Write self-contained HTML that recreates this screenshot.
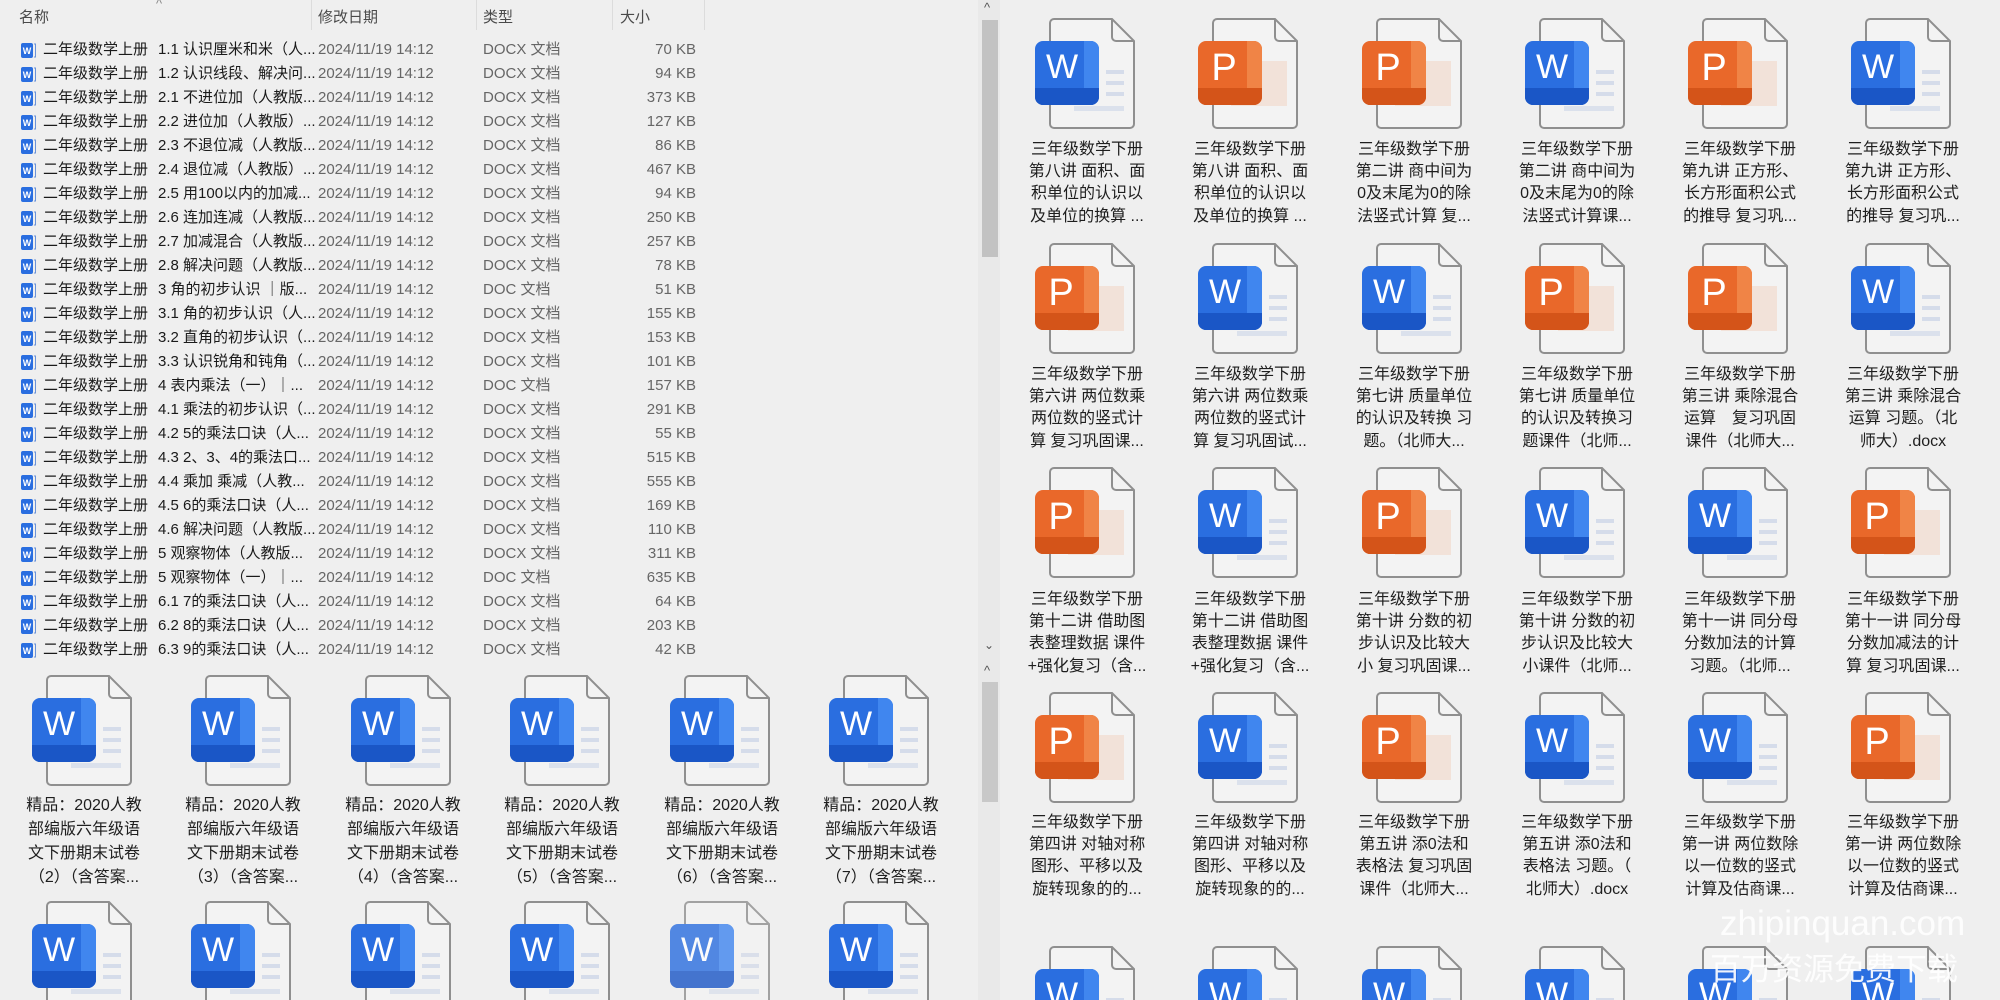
<!DOCTYPE html>
<html><head><meta charset="utf-8">
<style>
*{margin:0;padding:0;box-sizing:border-box}
html{width:2000px;height:1000px;overflow:hidden}
body{width:2000px;height:1000px;overflow:hidden;background:#efefef;font-family:"Liberation Sans","Noto Sans CJK SC",sans-serif;position:relative}
#wrap{position:absolute;left:0;top:0;width:2000px;height:1000px;overflow:hidden}
.a{position:absolute}
.hd{position:absolute;top:6px;font-size:15px;color:#4a4a4a}
.sep{position:absolute;top:0;width:1px;height:30px;background:#dcdcdc}
.r{position:absolute;left:0;height:24px;line-height:24px;font-size:15px;white-space:nowrap;width:980px}
.r span{position:absolute}
.r .n{left:43px;color:#1a1a1a}
.r .m{left:158px;color:#1a1a1a}
.r .d{left:318px;color:#666}
.r .t{left:483px;color:#666}
.r .s{right:284px;color:#666}
.r svg{position:absolute;left:20px;top:4px}
.lb{position:absolute;width:150px;text-align:center;font-size:16px;color:#1e1e1e;white-space:nowrap}
.R{line-height:22.2px}
.L{line-height:24px}
.ic{position:absolute;width:102px;height:112px}
</style></head><body><div id="wrap">
<svg width="0" height="0" style="position:absolute">
<defs>
<symbol id="pg" viewBox="0 0 102 112">
<path d="M20,1 H78 L100,23 V106 a4,4 0 0 1 -4,4 H20 a4,4 0 0 1 -4,-4 V5 a4,4 0 0 1 4,-4 Z" fill="#f3f3f3" stroke="#8f8f8f" stroke-width="2"/>
<path d="M78,1 V19 a4,4 0 0 0 4,4 H100" fill="none" stroke="#8f8f8f" stroke-width="2"/>
</symbol>
<symbol id="iw" viewBox="0 0 102 112">
<use href="#pg"/>
<rect x="72" y="52" width="18" height="4" fill="#d5dcea"/>
<rect x="72" y="63" width="18" height="4" fill="#d5dcea"/>
<rect x="72" y="74" width="18" height="4" fill="#d5dcea"/>
<rect x="40" y="88" width="50" height="5" fill="#dbe1ec"/>
<rect x="1" y="23" width="64" height="64" rx="8" fill="#2a6ee0"/>
<path d="M50,23 H57 a8,8 0 0 1 8,8 V70 H50 Z" fill="#4086ef"/>
<path d="M1,70 H65 V79 a8,8 0 0 1 -8,8 H9 a8,8 0 0 1 -8,-8 Z" fill="#1a56c6"/>
<text x="28" y="60" text-anchor="middle" font-family="Liberation Sans" font-size="34" fill="#fff">W</text>
</symbol>
<symbol id="ip" viewBox="0 0 102 112">
<use href="#pg"/>
<rect x="64" y="43" width="26" height="45" fill="#f2e2d9"/>
<rect x="34" y="84" width="30" height="4" fill="#f2e2d9"/>
<rect x="1" y="23" width="64" height="64" rx="8" fill="#e9682a"/>
<path d="M50,23 H57 a8,8 0 0 1 8,8 V70 H50 Z" fill="#f08446"/>
<path d="M1,70 H65 V79 a8,8 0 0 1 -8,8 H9 a8,8 0 0 1 -8,-8 Z" fill="#d45419"/>
<text x="27" y="62" text-anchor="middle" font-family="Liberation Sans" font-size="38" fill="#fff">P</text>
</symbol>
<symbol id="sm" viewBox="0 0 17 17">
<rect x="1" y="1" width="12" height="15" rx="2" fill="#2a6ee0"/>
<text x="7" y="12" text-anchor="middle" font-family="Liberation Sans" font-weight="bold" font-size="9" fill="#fff">W</text>
<path d="M14,2 h1.5 v13 h-1.5" fill="none" stroke="#6b93d8" stroke-width="1"/>
</symbol>
</defs></svg>

<div class="hd" style="left:19px">名称</div>
<div class="a" style="left:156px;top:-4px;font-size:13px;color:#888">^</div>
<div class="sep" style="left:311px"></div>
<div class="hd" style="left:318px">修改日期</div>
<div class="sep" style="left:476px"></div>
<div class="hd" style="left:483px">类型</div>
<div class="sep" style="left:612px"></div>
<div class="hd" style="left:620px">大小</div>
<div class="sep" style="left:704px"></div>

<div class="r" style="top:38px"><svg width="17" height="17"><use href="#sm"/></svg><span class="n">二年级数学上册</span><span class="m">1.1 认识厘米和米（人...</span><span class="d">2024/11/19 14:12</span><span class="t">DOCX 文档</span><span class="s">70 KB</span></div>
<div class="r" style="top:62px"><svg width="17" height="17"><use href="#sm"/></svg><span class="n">二年级数学上册</span><span class="m">1.2 认识线段、解决问...</span><span class="d">2024/11/19 14:12</span><span class="t">DOCX 文档</span><span class="s">94 KB</span></div>
<div class="r" style="top:86px"><svg width="17" height="17"><use href="#sm"/></svg><span class="n">二年级数学上册</span><span class="m">2.1 不进位加（人教版...</span><span class="d">2024/11/19 14:12</span><span class="t">DOCX 文档</span><span class="s">373 KB</span></div>
<div class="r" style="top:110px"><svg width="17" height="17"><use href="#sm"/></svg><span class="n">二年级数学上册</span><span class="m">2.2 进位加（人教版）...</span><span class="d">2024/11/19 14:12</span><span class="t">DOCX 文档</span><span class="s">127 KB</span></div>
<div class="r" style="top:134px"><svg width="17" height="17"><use href="#sm"/></svg><span class="n">二年级数学上册</span><span class="m">2.3 不退位减（人教版...</span><span class="d">2024/11/19 14:12</span><span class="t">DOCX 文档</span><span class="s">86 KB</span></div>
<div class="r" style="top:158px"><svg width="17" height="17"><use href="#sm"/></svg><span class="n">二年级数学上册</span><span class="m">2.4 退位减（人教版）...</span><span class="d">2024/11/19 14:12</span><span class="t">DOCX 文档</span><span class="s">467 KB</span></div>
<div class="r" style="top:182px"><svg width="17" height="17"><use href="#sm"/></svg><span class="n">二年级数学上册</span><span class="m">2.5 用100以内的加减...</span><span class="d">2024/11/19 14:12</span><span class="t">DOCX 文档</span><span class="s">94 KB</span></div>
<div class="r" style="top:206px"><svg width="17" height="17"><use href="#sm"/></svg><span class="n">二年级数学上册</span><span class="m">2.6 连加连减（人教版...</span><span class="d">2024/11/19 14:12</span><span class="t">DOCX 文档</span><span class="s">250 KB</span></div>
<div class="r" style="top:230px"><svg width="17" height="17"><use href="#sm"/></svg><span class="n">二年级数学上册</span><span class="m">2.7 加减混合（人教版...</span><span class="d">2024/11/19 14:12</span><span class="t">DOCX 文档</span><span class="s">257 KB</span></div>
<div class="r" style="top:254px"><svg width="17" height="17"><use href="#sm"/></svg><span class="n">二年级数学上册</span><span class="m">2.8 解决问题（人教版...</span><span class="d">2024/11/19 14:12</span><span class="t">DOCX 文档</span><span class="s">78 KB</span></div>
<div class="r" style="top:278px"><svg width="17" height="17"><use href="#sm"/></svg><span class="n">二年级数学上册</span><span class="m">3 角的初步认识 ｜版...</span><span class="d">2024/11/19 14:12</span><span class="t">DOC 文档</span><span class="s">51 KB</span></div>
<div class="r" style="top:302px"><svg width="17" height="17"><use href="#sm"/></svg><span class="n">二年级数学上册</span><span class="m">3.1 角的初步认识（人...</span><span class="d">2024/11/19 14:12</span><span class="t">DOCX 文档</span><span class="s">155 KB</span></div>
<div class="r" style="top:326px"><svg width="17" height="17"><use href="#sm"/></svg><span class="n">二年级数学上册</span><span class="m">3.2 直角的初步认识（...</span><span class="d">2024/11/19 14:12</span><span class="t">DOCX 文档</span><span class="s">153 KB</span></div>
<div class="r" style="top:350px"><svg width="17" height="17"><use href="#sm"/></svg><span class="n">二年级数学上册</span><span class="m">3.3 认识锐角和钝角（...</span><span class="d">2024/11/19 14:12</span><span class="t">DOCX 文档</span><span class="s">101 KB</span></div>
<div class="r" style="top:374px"><svg width="17" height="17"><use href="#sm"/></svg><span class="n">二年级数学上册</span><span class="m">4 表内乘法（一）｜...</span><span class="d">2024/11/19 14:12</span><span class="t">DOC 文档</span><span class="s">157 KB</span></div>
<div class="r" style="top:398px"><svg width="17" height="17"><use href="#sm"/></svg><span class="n">二年级数学上册</span><span class="m">4.1 乘法的初步认识（...</span><span class="d">2024/11/19 14:12</span><span class="t">DOCX 文档</span><span class="s">291 KB</span></div>
<div class="r" style="top:422px"><svg width="17" height="17"><use href="#sm"/></svg><span class="n">二年级数学上册</span><span class="m">4.2 5的乘法口诀（人...</span><span class="d">2024/11/19 14:12</span><span class="t">DOCX 文档</span><span class="s">55 KB</span></div>
<div class="r" style="top:446px"><svg width="17" height="17"><use href="#sm"/></svg><span class="n">二年级数学上册</span><span class="m">4.3 2、3、4的乘法口...</span><span class="d">2024/11/19 14:12</span><span class="t">DOCX 文档</span><span class="s">515 KB</span></div>
<div class="r" style="top:470px"><svg width="17" height="17"><use href="#sm"/></svg><span class="n">二年级数学上册</span><span class="m">4.4 乘加 乘减（人教...</span><span class="d">2024/11/19 14:12</span><span class="t">DOCX 文档</span><span class="s">555 KB</span></div>
<div class="r" style="top:494px"><svg width="17" height="17"><use href="#sm"/></svg><span class="n">二年级数学上册</span><span class="m">4.5 6的乘法口诀（人...</span><span class="d">2024/11/19 14:12</span><span class="t">DOCX 文档</span><span class="s">169 KB</span></div>
<div class="r" style="top:518px"><svg width="17" height="17"><use href="#sm"/></svg><span class="n">二年级数学上册</span><span class="m">4.6 解决问题（人教版...</span><span class="d">2024/11/19 14:12</span><span class="t">DOCX 文档</span><span class="s">110 KB</span></div>
<div class="r" style="top:542px"><svg width="17" height="17"><use href="#sm"/></svg><span class="n">二年级数学上册</span><span class="m">5 观察物体（人教版...</span><span class="d">2024/11/19 14:12</span><span class="t">DOCX 文档</span><span class="s">311 KB</span></div>
<div class="r" style="top:566px"><svg width="17" height="17"><use href="#sm"/></svg><span class="n">二年级数学上册</span><span class="m">5 观察物体（一）｜...</span><span class="d">2024/11/19 14:12</span><span class="t">DOC 文档</span><span class="s">635 KB</span></div>
<div class="r" style="top:590px"><svg width="17" height="17"><use href="#sm"/></svg><span class="n">二年级数学上册</span><span class="m">6.1 7的乘法口诀（人...</span><span class="d">2024/11/19 14:12</span><span class="t">DOCX 文档</span><span class="s">64 KB</span></div>
<div class="r" style="top:614px"><svg width="17" height="17"><use href="#sm"/></svg><span class="n">二年级数学上册</span><span class="m">6.2 8的乘法口诀（人...</span><span class="d">2024/11/19 14:12</span><span class="t">DOCX 文档</span><span class="s">203 KB</span></div>
<div class="r" style="top:638px"><svg width="17" height="17"><use href="#sm"/></svg><span class="n">二年级数学上册</span><span class="m">6.3 9的乘法口诀（人...</span><span class="d">2024/11/19 14:12</span><span class="t">DOCX 文档</span><span class="s">42 KB</span></div>

<div class="a" style="left:978px;top:0;width:22px;height:1000px;background:#e9e9e9"></div>
<div class="a" style="left:982px;top:20px;width:16px;height:237px;background:#c2c2c2"></div>
<div class="a" style="left:982px;top:682px;width:16px;height:120px;background:#c8c8c8"></div>
<div class="a" style="left:984px;top:0px;font-size:13px;color:#555">^</div>
<div class="a" style="left:984px;top:638px;font-size:12px;color:#555">⌄</div>
<div class="a" style="left:984px;top:663px;font-size:13px;color:#555">^</div>

<svg class="ic" style="left:31px;top:675px"><use href="#iw"/></svg>
<svg class="ic" style="left:190px;top:675px"><use href="#iw"/></svg>
<svg class="ic" style="left:350px;top:675px"><use href="#iw"/></svg>
<svg class="ic" style="left:509px;top:675px"><use href="#iw"/></svg>
<svg class="ic" style="left:669px;top:675px"><use href="#iw"/></svg>
<svg class="ic" style="left:828px;top:675px"><use href="#iw"/></svg>
<div class="lb L" style="left:9px;top:794px">精品：2020人教<br>部编版六年级语<br>文下册期末试卷<br>（2）（含答案...</div>
<div class="lb L" style="left:168px;top:794px">精品：2020人教<br>部编版六年级语<br>文下册期末试卷<br>（3）（含答案...</div>
<div class="lb L" style="left:328px;top:794px">精品：2020人教<br>部编版六年级语<br>文下册期末试卷<br>（4）（含答案...</div>
<div class="lb L" style="left:487px;top:794px">精品：2020人教<br>部编版六年级语<br>文下册期末试卷<br>（5）（含答案...</div>
<div class="lb L" style="left:647px;top:794px">精品：2020人教<br>部编版六年级语<br>文下册期末试卷<br>（6）（含答案...</div>
<div class="lb L" style="left:806px;top:794px">精品：2020人教<br>部编版六年级语<br>文下册期末试卷<br>（7）（含答案...</div>
<svg class="ic" style="left:31px;top:901px"><use href="#iw"/></svg>
<svg class="ic" style="left:190px;top:901px"><use href="#iw"/></svg>
<svg class="ic" style="left:350px;top:901px"><use href="#iw"/></svg>
<svg class="ic" style="left:509px;top:901px"><use href="#iw"/></svg>
<svg class="ic" style="left:669px;top:901px;opacity:0.8"><use href="#iw"/></svg>
<svg class="ic" style="left:828px;top:901px"><use href="#iw"/></svg>

<svg class="ic" style="left:1034px;top:18px"><use href="#iw"/></svg>
<svg class="ic" style="left:1197px;top:18px"><use href="#ip"/></svg>
<svg class="ic" style="left:1361px;top:18px"><use href="#ip"/></svg>
<svg class="ic" style="left:1524px;top:18px"><use href="#iw"/></svg>
<svg class="ic" style="left:1687px;top:18px"><use href="#ip"/></svg>
<svg class="ic" style="left:1850px;top:18px"><use href="#iw"/></svg>
<div class="lb R" style="left:1012px;top:139px">三年级数学下册<br>第八讲 面积、面<br>积单位的认识以<br>及单位的换算 ...</div>
<div class="lb R" style="left:1175px;top:139px">三年级数学下册<br>第八讲 面积、面<br>积单位的认识以<br>及单位的换算 ...</div>
<div class="lb R" style="left:1339px;top:139px">三年级数学下册<br>第二讲 商中间为<br>0及末尾为0的除<br>法竖式计算 复...</div>
<div class="lb R" style="left:1502px;top:139px">三年级数学下册<br>第二讲 商中间为<br>0及末尾为0的除<br>法竖式计算课...</div>
<div class="lb R" style="left:1665px;top:139px">三年级数学下册<br>第九讲 正方形、<br>长方形面积公式<br>的推导 复习巩...</div>
<div class="lb R" style="left:1828px;top:139px">三年级数学下册<br>第九讲 正方形、<br>长方形面积公式<br>的推导 复习巩...</div>
<svg class="ic" style="left:1034px;top:243px"><use href="#ip"/></svg>
<svg class="ic" style="left:1197px;top:243px"><use href="#iw"/></svg>
<svg class="ic" style="left:1361px;top:243px"><use href="#iw"/></svg>
<svg class="ic" style="left:1524px;top:243px"><use href="#ip"/></svg>
<svg class="ic" style="left:1687px;top:243px"><use href="#ip"/></svg>
<svg class="ic" style="left:1850px;top:243px"><use href="#iw"/></svg>
<div class="lb R" style="left:1012px;top:364px">三年级数学下册<br>第六讲 两位数乘<br>两位数的竖式计<br>算 复习巩固课...</div>
<div class="lb R" style="left:1175px;top:364px">三年级数学下册<br>第六讲 两位数乘<br>两位数的竖式计<br>算 复习巩固试...</div>
<div class="lb R" style="left:1339px;top:364px">三年级数学下册<br>第七讲 质量单位<br>的认识及转换 习<br>题。（北师大...</div>
<div class="lb R" style="left:1502px;top:364px">三年级数学下册<br>第七讲 质量单位<br>的认识及转换习<br>题课件（北师...</div>
<div class="lb R" style="left:1665px;top:364px">三年级数学下册<br>第三讲 乘除混合<br>运算　复习巩固<br>课件（北师大...</div>
<div class="lb R" style="left:1828px;top:364px">三年级数学下册<br>第三讲 乘除混合<br>运算 习题。（北<br>师大）.docx</div>
<svg class="ic" style="left:1034px;top:467px"><use href="#ip"/></svg>
<svg class="ic" style="left:1197px;top:467px"><use href="#iw"/></svg>
<svg class="ic" style="left:1361px;top:467px"><use href="#ip"/></svg>
<svg class="ic" style="left:1524px;top:467px"><use href="#iw"/></svg>
<svg class="ic" style="left:1687px;top:467px"><use href="#iw"/></svg>
<svg class="ic" style="left:1850px;top:467px"><use href="#ip"/></svg>
<div class="lb R" style="left:1012px;top:589px">三年级数学下册<br>第十二讲 借助图<br>表整理数据  课件<br>+强化复习（含...</div>
<div class="lb R" style="left:1175px;top:589px">三年级数学下册<br>第十二讲 借助图<br>表整理数据 课件<br>+强化复习（含...</div>
<div class="lb R" style="left:1339px;top:589px">三年级数学下册<br>第十讲 分数的初<br>步认识及比较大<br>小 复习巩固课...</div>
<div class="lb R" style="left:1502px;top:589px">三年级数学下册<br>第十讲 分数的初<br>步认识及比较大<br>小课件（北师...</div>
<div class="lb R" style="left:1665px;top:589px">三年级数学下册<br>第十一讲 同分母<br>分数加法的计算<br>习题。（北师...</div>
<div class="lb R" style="left:1828px;top:589px">三年级数学下册<br>第十一讲 同分母<br>分数加减法的计<br>算 复习巩固课...</div>
<svg class="ic" style="left:1034px;top:692px"><use href="#ip"/></svg>
<svg class="ic" style="left:1197px;top:692px"><use href="#iw"/></svg>
<svg class="ic" style="left:1361px;top:692px"><use href="#ip"/></svg>
<svg class="ic" style="left:1524px;top:692px"><use href="#iw"/></svg>
<svg class="ic" style="left:1687px;top:692px"><use href="#iw"/></svg>
<svg class="ic" style="left:1850px;top:692px"><use href="#ip"/></svg>
<div class="lb R" style="left:1012px;top:812px">三年级数学下册<br>第四讲 对轴对称<br>图形、平移以及<br>旋转现象的的...</div>
<div class="lb R" style="left:1175px;top:812px">三年级数学下册<br>第四讲 对轴对称<br>图形、平移以及<br>旋转现象的的...</div>
<div class="lb R" style="left:1339px;top:812px">三年级数学下册<br>第五讲 添0法和<br>表格法 复习巩固<br>课件（北师大...</div>
<div class="lb R" style="left:1502px;top:812px">三年级数学下册<br>第五讲 添0法和<br>表格法 习题。（<br>北师大）.docx</div>
<div class="lb R" style="left:1665px;top:812px">三年级数学下册<br>第一讲 两位数除<br>以一位数的竖式<br>计算及估商课...</div>
<div class="lb R" style="left:1828px;top:812px">三年级数学下册<br>第一讲 两位数除<br>以一位数的竖式<br>计算及估商课...</div>
<svg class="ic" style="left:1034px;top:946px"><use href="#iw"/></svg>
<svg class="ic" style="left:1197px;top:946px"><use href="#iw"/></svg>
<svg class="ic" style="left:1361px;top:946px"><use href="#iw"/></svg>
<svg class="ic" style="left:1524px;top:946px"><use href="#iw"/></svg>
<svg class="ic" style="left:1687px;top:946px"><use href="#iw"/></svg>
<svg class="ic" style="left:1850px;top:946px"><use href="#iw"/></svg>

<div class="a" style="left:1720px;top:904px;font-size:35px;color:#fff;opacity:.92;white-space:nowrap">zhipinquan.com</div>
<div class="a" style="left:1710px;top:952px;font-size:31px;line-height:36px;color:#fff;opacity:.92;white-space:nowrap">百万资源免费下载</div>
</div></body></html>
